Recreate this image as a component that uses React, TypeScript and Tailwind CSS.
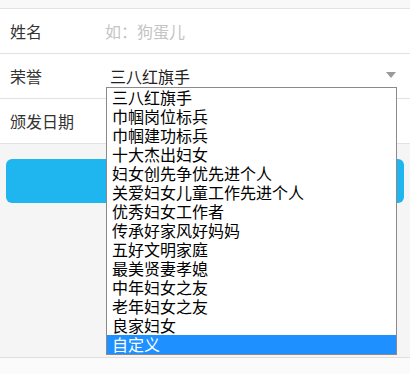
const honors = [
  '三八红旗手',
  '巾帼岗位标兵',
  '巾帼建功标兵',
  '十大杰出妇女',
  '妇女创先争优先进个人',
  '关爱妇女儿童工作先进个人',
  '优秀妇女工作者',
  '传承好家风好妈妈',
  '五好文明家庭',
  '最美贤妻孝媳',
  '中年妇女之友',
  '老年妇女之友',
  '良家妇女',
  '自定义',
]

export default function App() {
  const selected = '自定义'

  return (
    <div className="relative w-[410px] h-[374px] overflow-hidden bg-[#f5f5f5] text-[#333] font-['Noto_Sans_CJK_SC',sans-serif]">
      <div className="h-[9px] bg-[#f8f8f8] border-b border-[#e2e2e2]" />

      {/* Form rows */}
      <div className="bg-white">
        <div className="flex items-center h-[45px] border-b border-[#e2e2e2] text-[16px]">
          <span className="w-[105px] pl-[10px]">姓名</span>
          <span className="text-[#c4c4c4]">如：狗蛋儿</span>
        </div>
        <div className="flex items-center h-[45px] border-b border-[#e2e2e2] text-[16px]">
          <span className="w-[110px] pl-[10px]">荣誉</span>
          <span className="flex-1 text-[#222]">三八红旗手</span>
          <svg width="10" height="7" viewBox="0 0 10 7" className="mr-[14px] mb-[2px]">
            <path d="M0 0h10L5 6z" fill="#9a9a9a" />
          </svg>
        </div>
        <div className="flex items-center h-[45px] border-b border-[#e2e2e2] text-[16px]">
          <span className="pl-[10px]">颁发日期</span>
        </div>
      </div>

      {/* Submit area */}
      <div className="h-[213px] pt-[15px] px-[6px]">
        <div className="h-[44px] rounded-[6px] bg-[#1fb5ee]" />
      </div>
      <div className="h-[20px] bg-[#fbfbfb] border-t border-[#dedede]" />

      {/* Open select list */}
      <div className="absolute left-[106px] top-[87px] w-[291px] bg-white border border-[#8a8a8a] text-[16px] leading-[19px] text-black">
        {honors.map((h) => (
          <div
            key={h}
            className={`h-[19px] pl-[5px] whitespace-nowrap ${h === selected ? 'bg-[#1e90ff] text-white' : ''}`}
          >
            {h}
          </div>
        ))}
      </div>
    </div>
  )
}
